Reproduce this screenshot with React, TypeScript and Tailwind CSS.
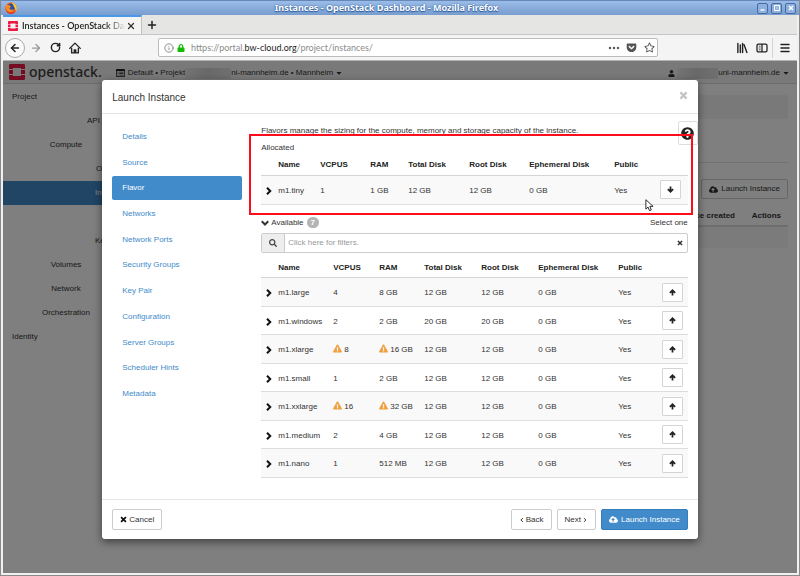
import React from "react";
import {
  FaCloudUploadAlt,
  FaExclamationTriangle,
  FaCaretDown,
  FaQuestionCircle,
  FaSearch,
  FaUser,
  FaLock,
  FaGetPocket,
  FaRegStar,
} from "react-icons/fa";
import { ArrowLeft, ArrowRight, Info, Menu, Plus, RotateCw, X } from "lucide-react";

type Flavor = {
  name: string;
  vcpus: string;
  ram: string;
  total: string;
  root: string;
  ephemeral: string;
  isPublic: string;
  warn?: boolean;
};

const allocated: Flavor[] = [
  { name: "m1.tiny", vcpus: "1", ram: "1 GB", total: "12 GB", root: "12 GB", ephemeral: "0 GB", isPublic: "Yes" },
];

const available: Flavor[] = [
  { name: "m1.large", vcpus: "4", ram: "8 GB", total: "12 GB", root: "12 GB", ephemeral: "0 GB", isPublic: "Yes" },
  { name: "m1.windows", vcpus: "2", ram: "2 GB", total: "20 GB", root: "20 GB", ephemeral: "0 GB", isPublic: "Yes" },
  { name: "m1.xlarge", vcpus: "8", ram: "16 GB", total: "12 GB", root: "12 GB", ephemeral: "0 GB", isPublic: "Yes", warn: true },
  { name: "m1.small", vcpus: "1", ram: "2 GB", total: "12 GB", root: "12 GB", ephemeral: "0 GB", isPublic: "Yes" },
  { name: "m1.xxlarge", vcpus: "16", ram: "32 GB", total: "12 GB", root: "12 GB", ephemeral: "0 GB", isPublic: "Yes", warn: true },
  { name: "m1.medium", vcpus: "2", ram: "4 GB", total: "12 GB", root: "12 GB", ephemeral: "0 GB", isPublic: "Yes" },
  { name: "m1.nano", vcpus: "1", ram: "512 MB", total: "12 GB", root: "12 GB", ephemeral: "0 GB", isPublic: "Yes" },
];

const allocatedCols = ["w-[17px]", "w-[42px]", "w-[50px]", "w-[38px]", "w-[61px]", "w-[60px]", "w-[85px]", "w-[46px]", ""];
const availableCols = ["w-[17px]", "w-[55px]", "w-[46px]", "w-[45px]", "w-[57px]", "w-[57px]", "w-[80px]", "w-[44px]", ""];

const steps = [
  "Details",
  "Source",
  "Flavor",
  "Networks",
  "Network Ports",
  "Security Groups",
  "Key Pair",
  "Configuration",
  "Server Groups",
  "Scheduler Hints",
  "Metadata",
];

type GlyphProps = { d: string; className: string; weight?: number };

function Glyph({ d, className, weight = 3 }: GlyphProps) {
  return (
    <svg viewBox="0 0 16 16" className={className} fill="none" stroke="currentColor" strokeWidth={weight} aria-hidden="true">
      <path d={d} />
    </svg>
  );
}

const TIMES = "M2.500 2.500l11 11M13.500 2.500l-11 11";
const CHEVRON_RIGHT = "M4 1.500 10.500 8 4 14.500";
const CHEVRON_DOWN = "M1.500 4.500 8 11l6.500-6.500";
const ARROW_UP = "M8 15V3M2 9l6-6 6 6";
const ARROW_DOWN = "M8 1v12M2 7l6 6 6-6";

function OpenStackMark({ className }: { className: string }) {
  return (
    <svg viewBox="0 0 16 16" className={className} aria-hidden="true">
      <path
        fill="#ed1944"
        d="M1.2 0h13.6A1.2 1.2 0 0 1 16 1.2V5h-4V4H4v1H0V1.2A1.2 1.2 0 0 1 1.2 0ZM0 6h4v4H0ZM12 6h4v4h-4ZM0 11h4v1h8v-1h4v3.8a1.2 1.2 0 0 1-1.2 1.2H1.2A1.2 1.2 0 0 1 0 14.8Z"
      />
    </svg>
  );
}

function FirefoxLogo() {
  return (
    <svg viewBox="0 0 24 24" className="size-3" aria-hidden="true">
      <circle cx="12" cy="12" r="11.5" fill="#f26a1b" />
      <circle cx="12" cy="10.500" r="7.500" fill="#2a4fa8" />
      <path d="M13 1c6 1 10.500 5.500 10.500 11.500 0 3-1 6-3 8 1-5 0-8-2-10-1-4-3-6-5.500-9.500Z" fill="#ffcc2e" />
      <path d="M2 5c2 1 3 1 5 1 2 0 3 2 5 3-1 2-3 2-3 4 1 3 5 3 8 1-1 5-5 7-9 6-5-1-8-6-6-15Z" fill="#ff8a1e" />
      <path d="M1 9c0 8 6 13 13 12 4 0 7-3 8-6 0 5-5 9-10 9C5 24 0 17 1 9Z" fill="#e0302a" />
    </svg>
  );
}

function HomeIcon() {
  return (
    <svg viewBox="0 0 16 16" className="size-3" fill="none" stroke="#222" strokeWidth="1.800" strokeLinejoin="round" aria-hidden="true">
      <path d="M1 8.500 8 1.500l7 7" strokeLinecap="round" />
      <path d="M3.500 7.500V14.500h9V7.500" />
      <path d="M7 14.500v-4h2v4" fill="#222" />
    </svg>
  );
}

function LibraryIcon() {
  return (
    <svg viewBox="0 0 16 16" className="size-3" fill="none" stroke="#222" strokeWidth="1.900" aria-hidden="true">
      <path d="M2.500 2v12M5.800 4v10M8.800 2v12M10.800 3.500 14.500 14" strokeLinecap="round" />
    </svg>
  );
}

function SidebarIcon() {
  return (
    <svg viewBox="0 0 16 14" className="h-[10px] w-3" fill="none" stroke="#222" strokeWidth="1.800" aria-hidden="true">
      <rect x="1" y="1.500" width="14" height="11" rx="2" />
      <path d="M8 1.500v11" />
      <path d="M3.500 4.500h2.500M3.500 7h2.500M3.500 9.500h2.500" strokeWidth="1" />
    </svg>
  );
}

function ProjectIcon() {
  return (
    <svg viewBox="0 0 18 16" className="h-2 w-[9px]" aria-hidden="true">
      <path fill="#222" fillRule="evenodd" d="M1.500 0h15A1.500 1.500 0 0 1 18 1.500v13a1.500 1.500 0 0 1-1.500 1.500h-15A1.500 1.500 0 0 1 0 14.500v-13A1.500 1.500 0 0 1 1.500 0ZM1.500 4v10.500h15V4ZM3 5.500h2V7H3Zm3.500 0H15V7H6.500ZM3 8.500h2V10H3Zm3.500 0H15V10H6.500ZM3 11.500h2V13H3Zm3.500 0H15V13H6.500Z" />
    </svg>
  );
}

function Redacted({ className }: { className: string }) {
  return <span aria-hidden="true" className={`inline-block h-[11px] bg-linear-to-r from-[#e8e8e8] via-[#d2d2d2] to-[#e0e0e0] ${className}`} />;
}

function TitleBar() {
  const box = "flex size-[11px] items-center justify-center rounded-[2px] border border-[#466ba3] bg-[#8db0df] text-white";
  return (
    <header className="grid h-[15px] grid-cols-[1fr_auto_1fr] items-center border-t border-[#6688b8] bg-linear-to-b from-[#9bbce8] to-[#779dcf] pr-[3px] pl-1">
      <FirefoxLogo />
      <h1 className="mr-7 font-['Noto_Sans','Open_Sans',sans-serif] text-[9px] leading-3 font-bold text-white [text-shadow:0_0_2px_#2d5a98,0_1px_1px_#2d5a98]">
        Instances - OpenStack Dashboard - Mozilla Firefox
      </h1>
      <div className="flex justify-end gap-[3px]">
        <button type="button" aria-label="Minimize" className={box}>
          <svg viewBox="0 0 8 8" className="size-2"><path d="M1.500 6h4" stroke="#fff" strokeWidth="1.400" /></svg>
        </button>
        <button type="button" aria-label="Maximize" className={box}>
          <svg viewBox="0 0 8 8" className="size-2"><path d="M1.500 1.500h5v5h-5ZM3.500 4h1" stroke="#fff" fill="none" /></svg>
        </button>
        <button type="button" aria-label="Close window" className={box}>
          <svg viewBox="0 0 8 8" className="size-2"><path d="m2 2 4 4M6 2 2 6" stroke="#fff" strokeWidth="1.500" /></svg>
        </button>
      </div>
    </header>
  );
}

function BrowserBars() {
  return (
    <div className="font-[Lato,sans-serif]">
      <div className="flex h-5 border-b border-[#c6c6c4] bg-[#e5e5e3]">
        <div className="flex w-[139px] items-center border-t-2 border-r border-t-[#4a98e8] border-r-[#c0c0be] bg-[#f4f4f3] pr-[5px] pl-[5px]">
          <OpenStackMark className="size-[10px] shrink-0" />
          <span className="ml-1 min-w-0 flex-1 bg-linear-to-r from-[#1c1c1c] from-80% to-transparent bg-clip-text text-[9px] leading-4 font-semibold whitespace-nowrap text-transparent">
            Instances - OpenStack Dash
          </span>
          <button type="button" aria-label="Close tab" className="shrink-0">
            <X className="size-[10px]" strokeWidth={3} color="#333" />
          </button>
        </div>
        <button type="button" aria-label="New tab" className="px-1">
          <Plus className="size-3" strokeWidth={3} color="#222" />
        </button>
      </div>
      <div className="flex h-[26px] items-center border-b border-[#b4b4b4] bg-[#f4f4f4] pr-[6px] pl-[2px]">
        <button type="button" aria-label="Back" className="flex size-5 items-center justify-center rounded-full border border-[#aaa] bg-[#fbfbfb]">
          <ArrowLeft className="size-3" strokeWidth={3} color="#222" />
        </button>
        <button type="button" aria-label="Forward" className="ml-[5px]">
          <ArrowRight className="size-3" strokeWidth={2.5} color="#999" />
        </button>
        <button type="button" aria-label="Reload" className="ml-2">
          <RotateCw className="size-[11px]" strokeWidth={3.2} color="#222" />
        </button>
        <button type="button" aria-label="Home" className="ml-2">
          <HomeIcon />
        </button>
        <div className="ml-[77px] flex h-[19px] flex-1 items-center rounded-[2px] border border-[#bbb] bg-white pr-[2px] pl-[5px]">
          <Info className="size-[10px]" strokeWidth={2} color="#777" />
          <FaLock className="ml-[3px] size-2" color="#12bc00" />
          <a href="#instances" className="ml-[6px] flex-1 text-[9px] leading-3 text-[#8c8c8c]">
            https://portal.<span className="text-[#1c1c1c]">bw-cloud.org</span>/project/instances/
          </a>
          <svg viewBox="0 0 12 4" className="h-1 w-3" fill="#555" aria-hidden="true">
            <circle cx="2" cy="2" r="1.200" /><circle cx="6" cy="2" r="1.200" /><circle cx="10" cy="2" r="1.200" />
          </svg>
          <FaGetPocket className="ml-[6px] size-[11px]" color="#555" />
          <FaRegStar className="ml-[7px] size-[11px]" color="#555" />
        </div>
        <div className="ml-[78px] flex items-center gap-2">
          <button type="button" aria-label="Library"><LibraryIcon /></button>
          <button type="button" aria-label="Sidebars"><SidebarIcon /></button>
        </div>
        <button type="button" aria-label="Menu" className="ml-1 flex h-5 items-center border-l border-[#d4d4d4] pl-[6px]">
          <Menu className="size-3" strokeWidth={3} color="#222" />
        </button>
      </div>
    </div>
  );
}

function SideNav() {
  const top = "flex h-6 items-center pl-[9px]";
  const group = "flex h-6 w-[126px] items-center justify-center";
  const leaf = "flex h-6 items-center justify-end pr-[10px]";
  return (
    <nav aria-label="Dashboard" className="w-[150px] shrink-0 pt-[1px]">
      <a href="#project" className={top}>Project</a>
      <a href="#api" className={leaf}><span className="w-14">API Access</span></a>
      <a href="#compute" className={group}>Compute</a>
      <a href="#overview" className={leaf}><span className="w-[47px]">Overview</span></a>
      <a href="#instances" className={`${leaf} mb-6 bg-[#428bca] text-white`}><span className="w-12">Instances</span></a>
      <a href="#keys" className={leaf}><span className="w-12">Key Pairs</span></a>
      <a href="#volumes" className={group}>Volumes</a>
      <a href="#network" className={group}>Network</a>
      <a href="#orchestration" className={group}>Orchestration</a>
      <a href="#identity" className={top}>Identity</a>
    </nav>
  );
}

function Dashboard() {
  return (
    <div className="min-h-full bg-white">
      <div className="flex h-[23px] items-center border-b border-[#d8d8d8] bg-[#f2f2f2] pr-[7px] pl-[6px]">
        <OpenStackMark className="size-4" />
        <span className="ml-1 font-['Noto_Sans','Open_Sans',sans-serif] text-[14px] leading-5 font-medium text-[#3c3c3c]">openstack.</span>
        <div className="ml-[14px] flex items-center pt-[2px]">
          <ProjectIcon />
          <span className="ml-[3px]">Default • Projekt</span>
          <Redacted className="w-[46px]" />
          <span>ni-mannheim.de • Mannheim</span>
          <FaCaretDown className="ml-[2px] size-2" />
        </div>
        <div className="ml-auto flex items-center pt-[2px]">
          <FaUser className="mr-[2px] size-[7px]" />
          <Redacted className="w-[41px]" />
          <span>uni-mannheim.de</span>
          <FaCaretDown className="ml-[2px] size-2" />
        </div>
      </div>
      <div className="flex">
        <SideNav />
        <main className="min-w-0 flex-1 px-[9px] pt-[11px]">
          <div className="h-6 rounded-[2px] bg-[#f2f2f2]" />
          <hr className="mt-[43px] border-[#e4e4e4]" />
          <div className="mt-4 flex justify-end gap-[3px]">
            <button type="button" className="h-5 w-16 rounded-[2px] border border-[#ccc]" aria-label="Filter" />
            <button type="button" className="flex h-5 items-center gap-[3px] rounded-[2px] border border-[#ccc] px-[7px]">
              <FaCloudUploadAlt className="size-[9px]" />
              Launch Instance
            </button>
          </div>
          <table className="mt-2 w-full text-right font-bold">
            <thead>
              <tr className="h-[19px] border-b-2 border-[#ddd]">
                <th>Time since created</th>
                <th className="w-[53px] pr-[7px]">Actions</th>
              </tr>
            </thead>
            <tbody>
              <tr className="h-[22px] bg-[#f7f7f7]"><td colSpan={2} /></tr>
            </tbody>
          </table>
        </main>
      </div>
    </div>
  );
}

function Warn() {
  return <FaExclamationTriangle className="mr-[2px] inline size-[9px] align-[-1px]" color="#f0a040" />;
}

function FlavorTable({ label, cols, rows, allocatedRows }: { label: string; cols: string[]; rows: Flavor[]; allocatedRows?: boolean }) {
  const cell = "pt-[2px]";
  return (
    <table aria-label={label} className="w-full table-fixed border-b border-[#ddd] text-left">
      <colgroup>
        {cols.map((c, i) => (
          <col key={i} className={c} />
        ))}
      </colgroup>
      <thead>
        <tr className="h-[19px] border-b border-[#d4d4d4] font-bold text-[#222]">
          <th />
          <th>Name</th>
          <th>VCPUS</th>
          <th>RAM</th>
          <th>Total Disk</th>
          <th>Root Disk</th>
          <th>Ephemeral Disk</th>
          <th>Public</th>
          <th />
        </tr>
      </thead>
      <tbody>
        {rows.map((f) => (
          <tr key={f.name} className="h-[28px] border-t border-[#ddd] whitespace-nowrap odd:h-[29px] odd:bg-[#f9f9f9]">
            <td className={cell}>
              <button type="button" aria-label={`Show details of ${f.name}`} className="block pl-1 text-[#111]">
                <Glyph d={CHEVRON_RIGHT} className="size-2" weight={4} />
              </button>
            </td>
            <td className={cell}>{f.name}</td>
            <td className={cell}>{f.warn && <Warn />}{f.vcpus}</td>
            <td className={cell}>{f.warn && <Warn />}{f.ram}</td>
            <td className={cell}>{f.total}</td>
            <td className={cell}>{f.root}</td>
            <td className={cell}>{f.ephemeral}</td>
            <td className={cell}>{f.isPublic}</td>
            <td>
              <button
                type="button"
                aria-label={allocatedRows ? `Remove ${f.name}` : `Allocate ${f.name}`}
                className={`ml-auto flex h-[19px] w-[21px] items-center justify-center rounded-[1px] border border-[#d4d4d4] bg-white text-[#222] ${allocatedRows ? "mr-[7px]" : "mr-[5px]"}`}
              >
                <Glyph d={allocatedRows ? ARROW_DOWN : ARROW_UP} className="size-[7px]" weight={4} />
              </button>
            </td>
          </tr>
        ))}
      </tbody>
    </table>
  );
}

function LaunchDialog() {
  const btn = "flex h-[21px] items-center rounded-[2px] border border-[#ccc] bg-white px-[7px]";
  return (
    <section role="dialog" aria-labelledby="dialog-title" className="relative w-3/4 rounded-[3px] bg-white shadow-[0_3px_9px_rgba(0,0,0,0.5)]">
      <div className="flex h-[34px] items-center justify-between border-b border-[#e5e5e5] px-[10px]">
        <h2 id="dialog-title" className="pt-[3px] text-[10px] leading-3">Launch Instance</h2>
        <button type="button" aria-label="Close" className="pb-[2px] text-[#c4c4c4]">
          <Glyph d={TIMES} className="size-[9px]" weight={4} />
        </button>
      </div>
      <div className="flex gap-[19px] px-[10px] pt-[9px] pb-[21px]">
        <nav aria-label="Steps" className="mt-[2px] flex h-[281px] w-[130px] shrink-0 flex-col justify-between">
          {steps.map((s) => (
            <a
              key={s}
              href="#step"
              aria-current={s === "Flavor" ? "step" : undefined}
              className="flex h-6 items-center rounded-[2px] px-[10px] text-[#428bca] aria-[current=step]:bg-[#428bca] aria-[current=step]:text-white"
            >
              {s}
            </a>
          ))}
        </nav>
        <div className="relative min-w-0 flex-1">
          <p className="leading-4">Flavors manage the sizing for the compute, memory and storage capacity of the instance.</p>
          <h3 className="mt-[1px] leading-4">Allocated</h3>
          <FlavorTable label="Allocated" cols={allocatedCols} rows={allocated} allocatedRows />
          <div className="mt-[10px] flex h-4 items-center">
            <Glyph d={CHEVRON_DOWN} className="size-2" weight={4} />
            <span className="ml-[2px]">Available</span>
            <span className="ml-[3px] rounded-full bg-[#b4b4b4] px-1 leading-[11px] font-bold text-white">7</span>
            <span className="ml-auto">Select one</span>
          </div>
          <label className="mt-[2px] flex h-5 items-center rounded-[2px] border border-[#ccc]">
            <span className="flex h-full w-[23px] items-center justify-center border-r border-[#ccc] bg-[#eee]">
              <FaSearch className="size-2" color="#444" />
            </span>
            <input type="text" aria-label="Filter" placeholder="Click here for filters." className="min-w-0 flex-1 px-[3px] outline-none placeholder:text-[#999]" />
            <button type="button" aria-label="Clear filters" className="pr-1">
              <Glyph d={TIMES} className="size-[6px]" weight={4} />
            </button>
          </label>
          <div className="mt-[6px]">
            <FlavorTable label="Available" cols={availableCols} rows={available} />
          </div>
          <button type="button" aria-label="Help" className="absolute -top-[2px] -right-[10px] flex h-6 w-5 items-center justify-center rounded-[2px] border border-[#ddd] bg-white">
            <FaQuestionCircle className="size-[13px]" color="#222" />
          </button>
          <div className="pointer-events-none absolute top-[11px] -right-[5px] -left-3 h-[81px] border-2 border-[#fb0d1b]" />
          <svg viewBox="0 0 12 18" className="absolute top-[76px] right-[34px] h-[13px] w-[9px]" aria-hidden="true">
            <path d="M1 1v13l3-2.800 2 5 2.500-1-2-5H11Z" fill="#fff" stroke="#222" strokeWidth="1.300" />
          </svg>
        </div>
      </div>
      <footer className="flex h-10 items-center gap-[5px] border-t border-[#e5e5e5] px-[10px]">
        <button type="button" className={`${btn} mr-auto gap-[2px]`}>
          <Glyph d={TIMES} className="size-[7px] text-[#111]" weight={4} />
          Cancel
        </button>
        <button type="button" className={`${btn} gap-[1px]`}>
          <Glyph d="M10.500 3 5 8l5.500 5" className="size-[6px]" weight={2.5} />
          Back
        </button>
        <button type="button" className={`${btn} gap-[1px]`}>
          Next
          <Glyph d="M5 3l5.500 5L5 13" className="size-[6px]" weight={2.5} />
        </button>
        <button type="button" className="flex h-[21px] items-center gap-[3px] rounded-[2px] border border-[#357ebd] bg-[#428bca] px-[7px] text-white">
          <FaCloudUploadAlt className="size-[9px]" />
          Launch Instance
        </button>
      </footer>
    </section>
  );
}

export default function App() {
  return (
    <div className="flex min-h-screen flex-col border-x border-b border-[#8a8a8a] bg-[#8a8a8a] font-['Liberation_Sans',Arial,sans-serif] text-[8px] leading-3 text-[#333]">
      <TitleBar />
      <div className="flex flex-1 flex-col border-x-2 border-b-2 border-[#f0f0f0]">
        <BrowserBars />
        <div className="relative flex-1 overflow-hidden bg-white">
          <Dashboard />
          <div className="absolute inset-0 flex items-start justify-center bg-black/50 pt-[19px]">
            <LaunchDialog />
          </div>
        </div>
      </div>
    </div>
  );
}
